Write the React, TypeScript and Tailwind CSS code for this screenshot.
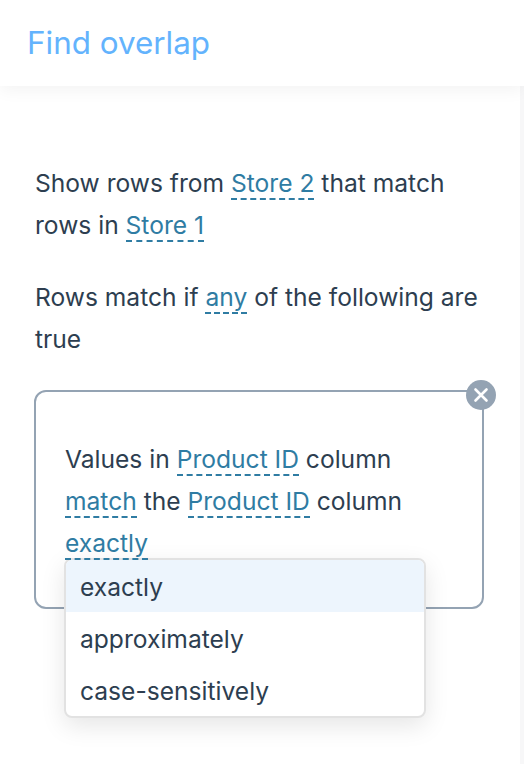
function Token({ children }: { children: React.ReactNode }) {
  return <span className="text-[#2f7ca3] border-b-2 border-dashed border-[#2f7ca3]">{children}</span>
}

function App() {
  const options = ['exactly', 'approximately', 'case-sensitively']

  return (
    <div className="h-[764px] w-[524px] overflow-hidden bg-white font-['Inter',sans-serif] text-[#2d3e50] relative">
      <header className="relative z-10 h-[86px] bg-white pl-[27px] pt-[24px] shadow-[0_4px_16px_rgba(0,0,0,0.05)]">
        <h1 className="text-[31.4px] leading-[38px] text-[#63b3fd]">Find overlap</h1>
      </header>

      <div className="flex h-[678px]">
        <main className="w-[520px] pl-[35px] pr-[30px] pt-[76px] text-[24.6px] leading-[42px]">
          <p>
            Show rows from <Token>Store 2</Token> that match rows in <Token>Store 1</Token>
          </p>
          <p className="mt-[30px]">
            Rows match if <Token>any</Token> of the following are true
          </p>

          <div className="relative ml-[-1px] mt-[30px] h-[219px] w-[450px] rounded-[12px] border-2 border-[#94a3b3] pl-[29px] pr-[40px] pt-[46px]">
            <p className="relative z-30">
              Values in <Token>Product ID</Token> column <Token>match</Token> the{' '}
              <Token>Product ID</Token> column <Token>exactly</Token>
            </p>

            <button className="absolute right-[-14px] top-[-12px] flex h-[30px] w-[30px] items-center justify-center rounded-full bg-[#94a3b3]">
              <svg width="16" height="16" viewBox="0 0 16 16" fill="none" stroke="white" strokeWidth="2.6" strokeLinecap="round">
                <path d="M2.5 2.5l11 11M13.5 2.5l-11 11" />
              </svg>
            </button>

            <ul className="absolute left-[28px] top-[166px] z-20 w-[362px] overflow-hidden rounded-[8px] border-2 border-[#e2e2e2] bg-white shadow-[0_8px_24px_rgba(0,0,0,0.1)]">
              {options.map((option, i) => (
                <li
                  key={option}
                  className={`h-[52px] pl-[14px] leading-[54px] ${i === 0 ? 'bg-[#edf5fd]' : ''}`}
                >
                  {option}
                </li>
              ))}
            </ul>
          </div>
        </main>
        <div className="w-[4px] bg-[#f7f7f8]" />
      </div>
    </div>
  )
}

export default App
